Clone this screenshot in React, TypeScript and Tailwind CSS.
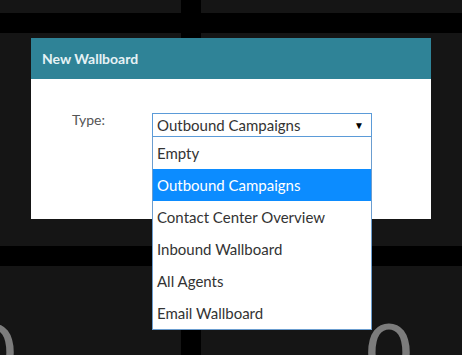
const options = [
  "Empty",
  "Outbound Campaigns",
  "Contact Center Overview",
  "Inbound Wallboard",
  "All Agents",
  "Email Wallboard",
];

function Panel({ digit }: { digit?: string }) {
  return (
    <div className="w-[376px] shrink-0 bg-[#151515] flex justify-center overflow-hidden">
      {digit && (
        <span className="pt-[44px] text-[80px] leading-none font-normal text-[#7c7c7c]">
          {digit}
        </span>
      )}
    </div>
  );
}

export default function App() {
  const selected = "Outbound Campaigns";
  return (
    <div
      className="relative h-[355px] w-[462px] overflow-hidden bg-black"
      style={{ fontFamily: "Lato, 'Open Sans', sans-serif" }}
    >
      {/* dashboard grid behind the dialog */}
      <div className="ml-[-195px] flex flex-col gap-5">
        <div className="flex h-[13px] gap-5">
          <Panel />
          <Panel />
        </div>
        <div className="flex h-[213px] gap-5">
          <Panel />
          <Panel />
        </div>
        <div className="flex h-[120px] gap-5">
          <Panel digit="0" />
          <Panel digit="0" />
        </div>
      </div>

      {/* dialog */}
      <div className="absolute left-[31px] top-[38px] w-[400px]">
        <div className="flex h-[41px] items-center bg-[#2f8397] px-[11px] text-[14px] font-bold text-[#e6f2f5]">
          New Wallboard
        </div>
        <div className="relative h-[140px] bg-white">
          <div className="flex pt-[34px]">
            <span className="ml-[41px] w-[80px] text-[14px] leading-none text-[#555]">
              Type:
            </span>
            <div className="relative">
              <div className="flex h-[24px] w-[220px] items-center justify-between border border-[#5b9bd8] pl-[4px] pr-[7px] text-[15px] text-[#333]">
                <span>{selected}</span>
                <span className="text-[10px] text-black">▼</span>
              </div>
              <ul className="absolute left-0 top-[24px] w-[220px] border border-t-0 border-[#6b9dcf] bg-white">
                {options.map((o) => (
                  <li
                    key={o}
                    className={
                      o === selected
                        ? "flex h-8 items-center bg-[#0c8cff] pl-[4px] text-[15px] text-white"
                        : "flex h-8 items-center pl-[4px] text-[15px] text-[#333]"
                    }
                  >
                    {o}
                  </li>
                ))}
              </ul>
            </div>
          </div>
        </div>
      </div>
    </div>
  );
}
